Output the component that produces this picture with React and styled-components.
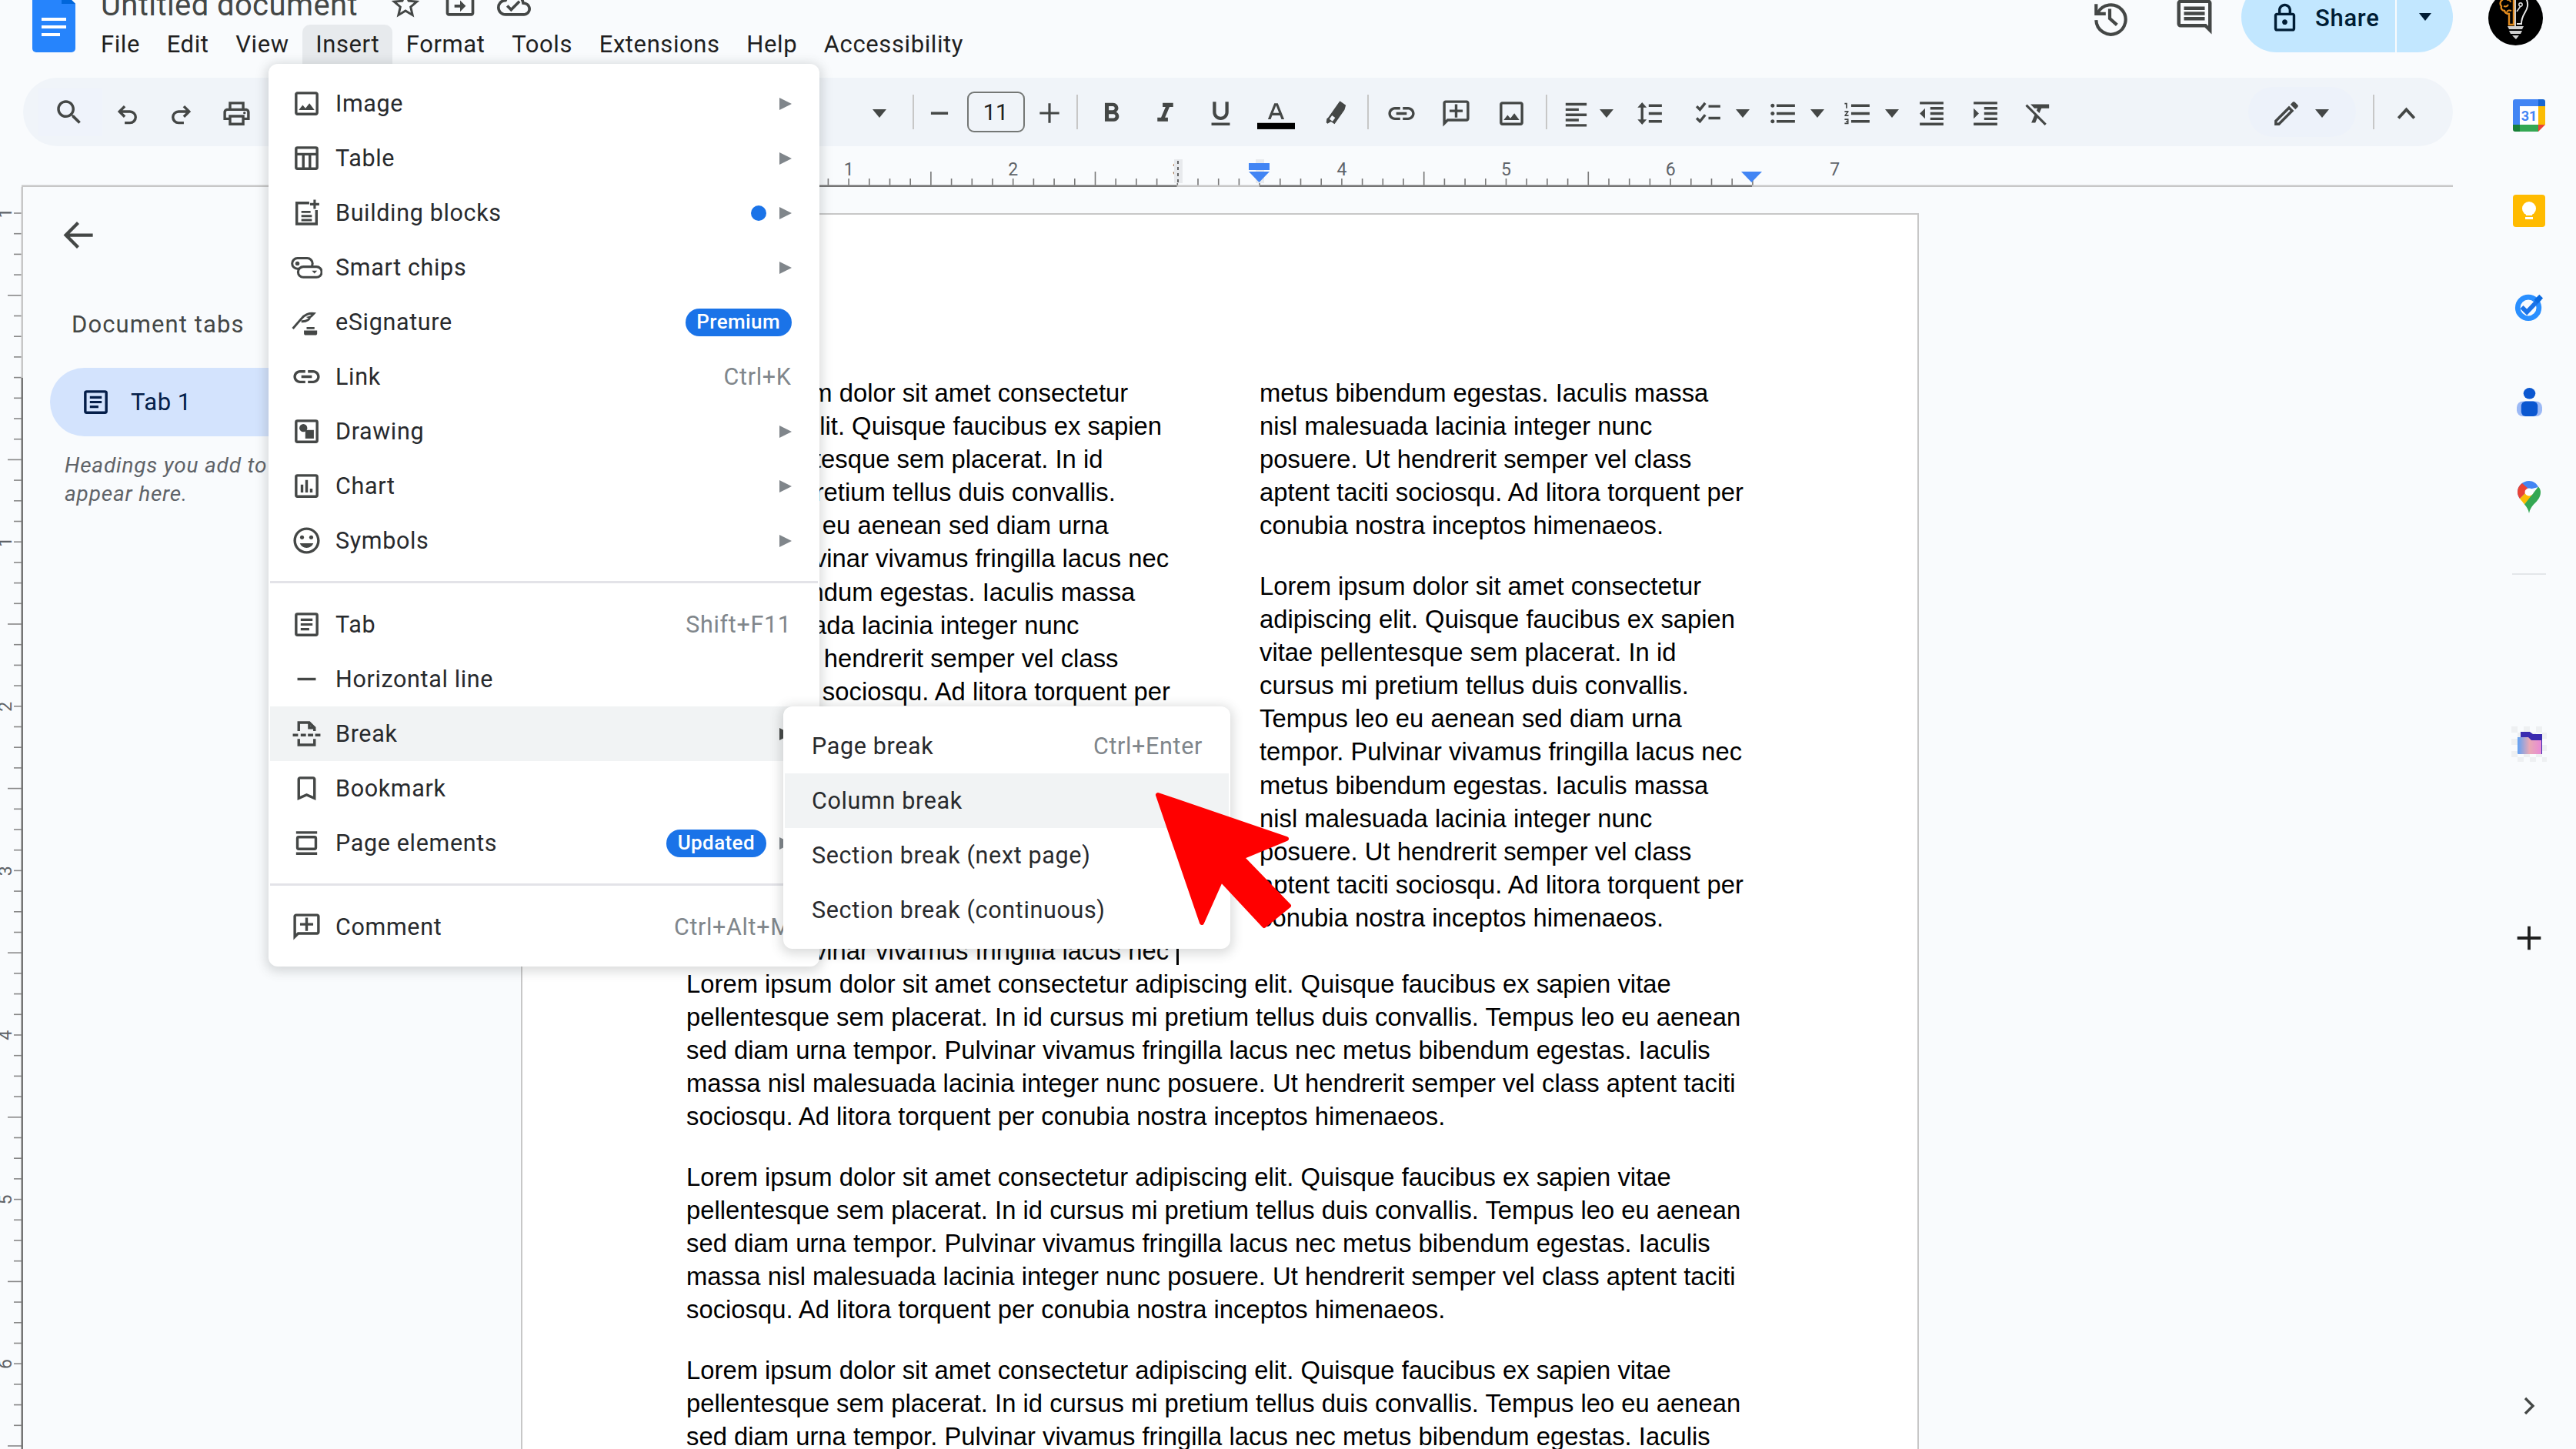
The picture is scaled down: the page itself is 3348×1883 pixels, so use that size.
import React from 'react';
import styled, { createGlobalStyle } from 'styled-components';

const GlobalStyle = createGlobalStyle`
  html, body {
    margin: 0;
    padding: 0;
    overflow: hidden;
    background: #f9fbfd;
  }
  * {
    box-sizing: border-box;
  }
`;

const Root = styled.div`
  position: relative;
  width: 3348px;
  height: 1883px;
  overflow: hidden;
  background: #f9fbfd;
  font-family: Roboto, 'Liberation Sans', sans-serif;
  color: #1f1f1f;
`;

const IconSvg = styled.svg`
  display: block;
  flex: none;
  width: ${(p) => p.$size}px;
  height: ${(p) => p.$size}px;
  color: ${(p) => p.$color || '#444746'};
  fill: currentColor;
`;

const Line = ({ d, w = 2 }) => (
  <path d={d} fill="none" stroke="currentColor" strokeWidth={w} />
);

const icons = {
  image: <path d="M19 5v14H5V5h14m0-2H5c-1.1 0-2 .9-2 2v14c0 1.1.9 2 2 2h14c1.1 0 2-.9 2-2V5c0-1.1-.9-2-2-2zm-4.86 8.86l-3 3.87L9 13.14 6 17h12l-3.86-5.14z" />,
  table: (
    <>
      <rect x="4" y="4" width="16" height="16" rx="1" fill="none" stroke="currentColor" strokeWidth="2" />
      <Line d="M4 9h16M9.5 9v11M14.5 9v11" />
    </>
  ),
  blocks: (
    <>
      <Line d="M14 4.5H4.5v16h15V10" />
      <path d="M8 10.5h7v1.7H8zM8 13.6h8v1.7H8zM8 16.7h8v1.7H8zM17.2 2h1.8v2.6h2.6v1.8H19V9h-1.8V6.4h-2.6V4.6h2.6z" />
    </>
  ),
  chips: (
    <>
      <rect x="1" y="5" width="15.5" height="8" rx="4" fill="none" stroke="currentColor" strokeWidth="1.8" />
      <circle cx="5" cy="9" r="1.6" />
      <rect x="5.5" y="11.5" width="18" height="8" rx="4" fill="#fff" stroke="currentColor" strokeWidth="1.8" />
      <path d="M16 14.5h4l-2 2.2z" />
    </>
  ),
  sign: (
    <>
      <Line d="M1.5 17L8 9.5c2-3 6-4.5 9.5-4-1 1-1.5 2.5-3.5 3 1.2.6-1.8 3.4-6 3" w="1.7" />
      <path d="M10 18.4h10v2.4c0 .7-.5 1.2-1.2 1.2h-7.6c-.7 0-1.2-.5-1.2-1.2zM12 15.8h6v1.6h-6z" />
    </>
  ),
  link: <path d="M17 7h-4v2h4c1.65 0 3 1.35 3 3s-1.35 3-3 3h-4v2h4c2.76 0 5-2.24 5-5s-2.24-5-5-5zm-6 8H7c-1.65 0-3-1.35-3-3s1.35-3 3-3h4V7H7c-2.76 0-5 2.24-5 5s2.24 5 5 5h4v-2zm-3-4h8v2H8z" />,
  drawing: (
    <>
      <rect x="4" y="4" width="16" height="16" rx="1" fill="none" stroke="currentColor" strokeWidth="2" />
      <circle cx="9.5" cy="9.5" r="3" />
      <rect x="11" y="11" width="6.5" height="6.5" />
    </>
  ),
  chart: (
    <>
      <rect x="4" y="4" width="16" height="16" rx="1" fill="none" stroke="currentColor" strokeWidth="2" />
      <path d="M7.5 11h2v6h-2zM11 7.5h2V17h-2zM14.5 14h2v3h-2z" />
    </>
  ),
  smile: (
    <>
      <path d="M11.99 2C6.47 2 2 6.48 2 12s4.47 10 9.99 10C17.52 22 22 17.52 22 12S17.52 2 11.99 2zM12 20c-4.42 0-8-3.58-8-8s3.58-8 8-8 8 3.58 8 8-3.58 8-8 8z" />
      <circle cx="8.5" cy="9.5" r="1.5" />
      <circle cx="15.5" cy="9.5" r="1.5" />
      <path d="M12 17.5c2.33 0 4.31-1.46 5.11-3.5H6.89c.8 2.04 2.78 3.5 5.11 3.5z" />
    </>
  ),
  tab: (
    <>
      <rect x="4" y="4" width="16" height="16" rx="1" fill="none" stroke="currentColor" strokeWidth="2" />
      <path d="M7.5 7.5h9v1.8h-9zM7.5 11.1h9v1.8h-9zM7.5 14.7h6.5v1.8H7.5z" />
    </>
  ),
  hline: <path d="M5 11h14v2H5z" />,
  brk: (
    <>
      <Line d="M6 10V3.5h8l4 4V10M6 16v4.5h12V16" />
      <path d="M13 3.5h2v3h3.5v2H13zM1.5 12h4v2h-4zM7.5 12h4v2h-4zM13 12h4v2h-4zM18.5 12h4v2h-4z" />
    </>
  ),
  bookmark: <path d="M17 3H7c-1.1 0-2 .9-2 2v16l7-3 7 3V5c0-1.1-.9-2-2-2zm0 15l-5-2.18L7 18V5h10v13z" />,
  elements: (
    <>
      <path d="M4 3h16v2H4zM4 19h16v2H4z" />
      <rect x="5" y="7.5" width="14" height="9" rx="1" fill="none" stroke="currentColor" strokeWidth="2" />
    </>
  ),
  addComment: <path d="M20 2H4c-1.1 0-2 .9-2 2v18l4-4h14c1.1 0 2-.9 2-2V4c0-1.1-.9-2-2-2zm0 14H5.17L4 17.17V4h16v12zM13 5h-2v4H7v2h4v4h2v-4h4V9h-4z" />,
  search: <path d="M15.5 14h-.79l-.28-.27C15.41 12.59 16 11.11 16 9.5 16 5.91 13.09 3 9.5 3S3 5.91 3 9.5 5.91 16 9.5 16c1.61 0 3.09-.59 4.23-1.57l.27.28v.79l5 4.99L20.49 19l-4.99-5zm-6 0C7.01 14 5 11.99 5 9.5S7.01 5 9.5 5 14 7.01 14 9.5 11.99 14 9.5 14z" />,
  undo: <Line d="M10 6.5L6 10.5l4 4M6 10.5h8a4.3 4.3 0 0 1 0 8.6h-4" />,
  redo: <Line d="M14 6.5l4 4-4 4M18 10.5h-8a4.3 4.3 0 0 0 0 8.6h4" />,
  print: (
    <>
      <path d="M19 8h-1V3H6v5H5c-1.66 0-3 1.34-3 3v6h4v4h12v-4h4v-6c0-1.66-1.34-3-3-3zM8 5h8v3H8V5zm8 12v2H8v-4h8v2zm2-2v-2H6v2H4v-4c0-.55.45-1 1-1h14c.55 0 1 .45 1 1v4h-2z" />
      <circle cx="18" cy="11.5" r="1" />
    </>
  ),
  minus: <path d="M5 11h14v2.2H5z" />,
  plus: <path d="M11 4h2v7h7v2h-7v7h-2v-7H4v-2h7z" />,
  bold: <path d="M15.6 10.79c.97-.67 1.65-1.77 1.65-2.79 0-2.26-1.75-4-4-4H7v14h7.04c2.09 0 3.71-1.7 3.71-3.79 0-1.52-.86-2.82-2.15-3.42zM10 6.5h3c.83 0 1.5.67 1.5 1.5s-.67 1.5-1.5 1.5h-3v-3zm3.5 9H10v-3h3.5c.83 0 1.5.67 1.5 1.5s-.67 1.5-1.5 1.5z" />,
  italic: <path d="M10 4v3h2.21l-3.42 8H6v3h8v-3h-2.21l3.42-8H18V4z" />,
  underline: <path d="M12 17c3.31 0 6-2.69 6-6V3h-2.5v8c0 1.93-1.57 3.5-3.5 3.5S8.5 12.93 8.5 11V3H6v8c0 3.31 2.69 6 6 6zm-7 2v2h14v-2H5z" />,
  textColor: (
    <>
      <path fillRule="evenodd" d="M10.9 5.5L6.8 15.7h1.8l.9-2.5h5l.9 2.5h1.8L13.1 5.5zM10.1 11.6L12 6.8l1.9 4.8z" />
      <rect x="0" y="18" width="24" height="4" fill="#000" />
    </>
  ),
  marker: <path fillRule="evenodd" d="M15.5 2.5l4.5 3.2-1 3.5-7.6 10.8-2.700-1.900-2.600 1.600-1-.8.4-3 1.100-.9 7.600-10.800zM9.500 13.500l-2 2.800 2.400 1.700 2-2.800z" />,
  addImage: <path d="M19 5v14H5V5h14m0-2H5c-1.1 0-2 .9-2 2v14c0 1.1.9 2 2 2h14c1.1 0 2-.9 2-2V5c0-1.1-.9-2-2-2zm-4.86 8.86l-3 3.87L9 13.14 6 17h12l-3.86-5.14z" />,
  align: <path d="M4 4h16v2H4zM4 8h10v2H4zM4 12h16v2H4zM4 16h10v2H4zM4 20h16v2H4z" />,
  spacing: <path d="M6 3.5L2.5 7.5h2.5v9H2.5L6 20.5l3.5-4H7v-9h2.5zM11 5h10v2H11zM11 11h10v2H11zM11 17h10v2H11z" />,
  checks: (
    <>
      <Line d="M3 6.5l2.5 2.5L9.5 4M3 15.5L5.500 18l4-5" />
      <path d="M12 5.500h9v2h-9zM12 14.500h9v2h-9z" />
    </>
  ),
  bullets: <path d="M4 10.500c-.83 0-1.500.67-1.500 1.500s.67 1.500 1.500 1.500 1.500-.67 1.500-1.500-.67-1.500-1.500-1.500zm0-6c-.83 0-1.500.67-1.500 1.500S3.170 7.500 4 7.500 5.500 6.830 5.500 6 4.830 4.500 4 4.500zm0 12c-.83 0-1.500.68-1.500 1.500s.68 1.500 1.500 1.500 1.500-.68 1.500-1.500-.67-1.500-1.500-1.500zM7 19h14v-2H7v2zm0-6h14v-2H7v2zm0-8v2h14V5H7z" />,
  numbers: <path d="M2 17h2v.5H3v1h1v.5H2v1h3v-4H2v1zm1-9h1V4H2v1h1v3zm-1 3h1.800L2 13.100v.9h3v-1H3.200L5 10.900V10H2v1zm5-6v2h14V5H7zm0 14h14v-2H7v2zm0-6h14v-2H7v2z" />,
  outdent: <path d="M11 17h10v-2H11v2zm-8-5l4 4V8l-4 4zm0 9h18v-2H3v2zM3 3v2h18V3H3zm8 6h10V7H11v2zm0 4h10v-2H11v2z" />,
  indent: <path d="M3 21h18v-2H3v2zM3 8v8l4-4-4-4zm8 9h10v-2H11v2zM3 3v2h18V3H3zm8 6h10V7H11v2zm0 4h10v-2H11v2z" />,
  clear: <path d="M3.270 5L2 6.270l6.970 6.970L6.500 19h3l1.570-3.660L16.730 21 18 19.730 3.550 5.270 3.270 5zM6 5v.18L8.820 8h2.400l-.72 1.680 2.100 2.100L14.210 8H20V5H6z" />,
  pencil: <path d="M14.060 9.020l.92.92L5.920 19H5v-.92l9.060-9.060M17.660 3c-.25 0-.51.1-.7.29l-1.830 1.830 3.750 3.750 1.830-1.830c.39-.39.39-1.020 0-1.410l-2.340-2.340c-.2-.2-.45-.29-.71-.29zm-3.600 3.190L3 17.250V21h3.750L17.810 9.940l-3.750-3.750z" />,
  chevronUp: <Line d="M6 15.500l6-6.500 6 6.500" w="2.200" />,
  chevronRight: <Line d="M9 6l6 6-6 6" />,
  history: (
    <>
      <Line d="M4.500 9.500A9.200 9.200 0 1 1 3.500 14" />
      <path d="M2.500 4v7h7v-2H4.500V4z" />
      <Line d="M12 7v6l4.500 4" />
    </>
  ),
  comments: <path d="M21.990 4c0-1.100-.89-2-1.990-2H4c-1.100 0-2 .9-2 2v12c0 1.100.9 2 2 2h14l4 4-.01-18zM20 4v13.170L18.830 16H4V4h16zM6 12h12v2H6zm0-3h12v2H6zm0-3h12v2H6z" />,
  lock: <path d="M18 8h-1V6c0-2.760-2.240-5-5-5S7 3.240 7 6v2H6c-1.100 0-2 .9-2 2v10c0 1.100.9 2 2 2h12c1.100 0 2-.9 2-2V10c0-1.100-.9-2-2-2zM9 6c0-1.660 1.340-3 3-3s3 1.340 3 3v2H9V6zm9 14H6V10h12v10zm-6-3c1.100 0 2-.9 2-2s-.9-2-2-2-2 .9-2 2 .9 2 2 2z" />,
  star: <path d="M22 9.240l-7.190-.62L12 2 9.190 8.630 2 9.240l5.460 4.730L5.820 21 12 17.270 18.180 21l-1.630-7.030L22 9.240zM12 15.400l-3.760 2.270 1-4.280-3.320-2.880 4.380-.38L12 6.100l1.710 4.040 4.380.38-3.320 2.880 1 4.280L12 15.400z" />,
  move: <path d="M20 6h-8l-2-2H4c-1.100 0-2 .9-2 2v12c0 1.100.9 2 2 2h16c1.100 0 2-.9 2-2V8c0-1.100-.9-2-2-2zm0 12H4V6h5.170l2 2H20v10zM12 17l4-4-4-4v3H8v2h4z" />,
  cloud: (
    <>
      <path d="M19.350 10.040A7.490 7.490 0 0 0 12 4C9.110 4 6.600 5.640 5.350 8.040A5.994 5.994 0 0 0 0 14c0 3.310 2.690 6 6 6h13c2.760 0 5-2.240 5-5 0-2.640-2.050-4.780-4.650-4.960zM19 18H6c-2.210 0-4-1.790-4-4 0-2.050 1.530-3.760 3.560-3.970l1.070-.11.5-.95A5.469 5.469 0 0 1 12 6c2.620 0 4.880 1.860 5.390 4.430l.3 1.500 1.530.11A2.980 2.980 0 0 1 22 15c0 1.650-1.350 3-3 3z" />
      <path d="M10 17l-3.500-3.500 1.410-1.410L10 14.170l5.180-5.180 1.410 1.420z" />
    </>
  ),
  back: <Line d="M21 12H5M12 4.500L4.500 12l7.500 7.500" w="2" />,
};

const Icon = ({ name, size = 41, color }) => (
  <IconSvg viewBox="0 0 24 24" $size={size} $color={color}>
    {icons[name]}
  </IconSvg>
);

/* ---------- header ---------- */

const Header = styled.header`
  display: flex;
  height: 101px;
  padding: 0 43px 0 42px;
`;

const Logo = styled.svg`
  flex: none;
  width: 56px;
  height: 81px;
  margin-top: -13px;
`;

const TitleBlock = styled.div`
  margin-left: 33px;
`;

const TitleRow = styled.div`
  display: flex;
  align-items: center;
  height: 32px;
`;

const Title = styled.div`
  width: 333px;
  margin-top: -19px;
  font-size: 40px;
  line-height: 48px;
  letter-spacing: 0.4px;
  color: #444746;
  white-space: nowrap;
`;

const TitleIcons = styled.div`
  display: flex;
  align-items: center;
  gap: 26.5px;
  margin: -21px 0 0 41px;
`;

const MenuBar = styled.nav`
  display: flex;
  margin-left: -17.3px;
`;

const MenuButton = styled.div`
  height: 55px;
  padding: 0 17.3px;
  line-height: 51px;
  font-size: 31px;
  letter-spacing: 0.6px;
  border-radius: 10px 10px 0 0;
  color: #1f1f1f;
  background: ${(p) => (p.$open ? '#e7eaed' : 'transparent')};
`;

const HeaderActions = styled.div`
  display: flex;
  align-items: center;
  height: 92px;
  margin: -24px 0 0 auto;
`;

const ActionButton = styled.div`
  display: flex;
  justify-content: center;
  width: 110px;
`;

const ShareGroup = styled.div`
  display: flex;
  height: 92px;
  margin-left: 6px;
  color: #001d35;
`;

const ShareMain = styled.div`
  display: flex;
  align-items: center;
  gap: 19px;
  width: 200px;
  padding-left: 36px;
  background: #c2e7ff;
  border-radius: 46px 0 0 46px;
  font-size: 31px;
  font-weight: 500;
  letter-spacing: 0.7px;
  padding-top: 2px;
`;

const ShareDrop = styled.div`
  display: flex;
  align-items: center;
  justify-content: center;
  width: 73px;
  margin-left: 2px;
  background: #c2e7ff;
  border-radius: 0 46px 46px 0;
`;

const Avatar = styled.svg`
  flex: none;
  width: 71px;
  height: 71px;
  margin: 3px 0 0 46px;
`;

/* ---------- toolbar ---------- */

const Workspace = styled.div`
  display: flex;
`;

const Main = styled.main`
  flex: none;
  width: 3200px;
`;

const Toolbar = styled.div`
  display: flex;
  align-items: center;
  height: 89px;
  width: 3158px;
  margin-left: 30px;
  padding-top: 3px;
  background: #f0f4f9;
  border-radius: 45px;
`;

const Slot = styled.div`
  position: relative;
  display: flex;
  justify-content: center;
  align-items: center;
  flex: none;
  width: 0;
  margin-left: ${(p) => p.$dx}px;
`;

const SearchBox = styled.div`
  display: flex;
  align-items: center;
  justify-content: center;
  flex: none;
  width: 83px;
  height: 62px;
  margin-top: -3px;
  padding-right: 3px;
  background: #eff3fb;
`;

const ModeBox = styled.div`
  flex: none;
  width: 140px;
  height: 65px;
  margin-top: -3px;
  border-radius: 32px;
  background: #edf2fa;
`;

const Caret = styled.span`
  flex: none;
  width: 0;
  height: 0;
  border-left: ${(p) => p.$half || 9}px solid transparent;
  border-right: ${(p) => p.$half || 9}px solid transparent;
  border-top: ${(p) => (p.$half ? p.$half + 2 : 11)}px solid ${(p) => p.$color || '#444746'};
`;

const ToolSep = styled.span`
  flex: none;
  width: 2px;
  height: 45px;
  margin-top: -3px;
  background: #c7c7c7;
`;

const SizeBox = styled.div`
  flex: none;
  width: 75px;
  height: 53px;
  margin-top: -3px;
  border: 2px solid #747775;
  border-radius: 9px;
  text-align: center;
  line-height: 50px;
  font-size: 29px;
  color: #1f1f1f;
`;

const Tool = ({ dx, name, size }) => (
  <Slot $dx={dx}>
    <Icon name={name} size={size} />
  </Slot>
);

const ToolCaret = ({ dx }) => (
  <Slot $dx={dx}>
    <Caret />
  </Slot>
);

const Divider = ({ dx }) => (
  <Slot $dx={dx}>
    <ToolSep />
  </Slot>
);

/* ---------- rulers ---------- */

const RulerStrip = styled.svg`
  display: block;
  width: 3160px;
  height: 53px;
  margin-left: 28px;
`;

const INCH = 213.6;
const ORIGIN = 889.5;

const HorizontalRuler = () => {
  const ticks = [];
  for (let i = -8; i <= 52; i += 1) {
    const x = ORIGIN + (i * INCH) / 8;
    const long = ((i % 8) + 8) % 8 === 4;
    ticks.push(<line key={i} x1={x} x2={x} y1={long ? 223 : 232} y2={241} stroke="#777" strokeWidth="1.6" />);
  }
  return (
    <RulerStrip viewBox="28 190 3160 53">
      {ticks}
      {[1, 2, 3, 4, 5, 6, 7].map((n) => (
        <text key={n} x={ORIGIN + n * INCH} y="228" textAnchor="middle" fontFamily="Roboto" fontSize="23" fill="#5f6368">
          {n}
        </text>
      ))}
      <rect x="28" y="240.500" width="3160" height="2.500" fill="#c7c7c7" />
      <rect x="889.500" y="240.500" width="640" height="2.500" fill="#757575" />
      <rect x="1637" y="240.500" width="640" height="2.500" fill="#757575" />
      <rect x="1526" y="207" width="11" height="31" fill="#e8eaed" />
      <line x1="1531" x2="1531" y1="209" y2="237" stroke="#444" strokeWidth="1.600" strokeDasharray="4 4" />
      <rect x="1632" y="207" width="11" height="31" fill="#e8eaed" />
      <rect x="1623" y="212" width="27" height="9" fill="#4285f4" />
      <path d="M1623 223h27l-13.500 14z" fill="#4285f4" />
      <path d="M2263 223h27l-13.500 14z" fill="#4285f4" />
    </RulerStrip>
  );
};

const VRulerSvg = styled.svg`
  display: block;
  flex: none;
  width: 30px;
  height: 1640px;
`;

const VerticalRuler = () => {
  const ticks = [];
  for (let i = 0; i <= 64; i += 1) {
    const y = 277 + (i * INCH) / 8;
    const long = i % 8 === 4;
    ticks.push(<line key={i} x1={long ? 10 : 18} x2="28" y1={y} y2={y} stroke="#888" strokeWidth="1.600" />);
  }
  const labels = [
    { n: 1, y: 277 },
    { n: 1, y: 704.600 },
    { n: 2, y: 918.200 },
    { n: 3, y: 1131.800 },
    { n: 4, y: 1345.400 },
    { n: 5, y: 1559 },
    { n: 6, y: 1772.600 },
  ];
  return (
    <VRulerSvg viewBox="0 243 30 1640">
      {ticks}
      {labels.map((l, i) => (
        <text key={i} transform={`translate(15 ${l.y}) rotate(-90)`} textAnchor="middle" fontFamily="Roboto" fontSize="23" fill="#5f6368">
          {l.n}
        </text>
      ))}
      <rect x="27.500" y="243" width="2.500" height="248" fill="#c7c7c7" />
      <rect x="27.500" y="491" width="2.500" height="1400" fill="#757575" />
    </VRulerSvg>
  );
};

/* ---------- document ---------- */

const Body = styled.div`
  display: flex;
  height: 1640px;
`;

const Sidebar = styled.aside`
  flex: none;
  width: 647px;
  padding: 36.5px 0 0 55px;
`;

const BackIcon = styled.div`
  margin: 0 0 71.5px -9.5px;
`;

const SideTitle = styled.div`
  margin-left: 8px;
  font-size: 31px;
  line-height: 40px;
  letter-spacing: 1.1px;
  color: #444746;
`;

const TabPill = styled.div`
  display: flex;
  align-items: center;
  gap: 25px;
  width: 380px;
  height: 89px;
  margin: 36px 0 0 -20px;
  padding-left: 39px;
  border-radius: 45px;
  background: #d3e3fd;
  font-size: 31px;
  letter-spacing: 0.5px;
  color: #041e49;
`;

const SideHint = styled.div`
  width: 560px;
  margin: 19px 0 0 -1px;
  font-size: 28px;
  line-height: 37px;
  font-style: italic;
  letter-spacing: 0.8px;
  color: #5f6368;
`;

const Page = styled.article`
  flex: none;
  width: 1817px;
  margin-top: 34px;
  padding: 210px 214px 0 213px;
  background: #fff;
  border: solid #c7c7c7;
  border-width: 2px 2px 0 2px;
  font-family: 'Liberation Sans', Arial, sans-serif;
  font-size: 32.800px;
  line-height: 43.100px;
  color: #000;
`;

const Columns = styled.div`
  display: grid;
  grid-template-columns: 640px 640px;
  column-gap: 105px;
`;

const Para = styled.p`
  margin: 0 0 ${(p) => (p.$last ? 0 : 35.5)}px;
`;

const TextLine = styled.span`
  display: block;
  white-space: nowrap;
`;

const Caretline = styled.span`
  display: inline-block;
  width: 3px;
  height: 36px;
  margin-left: 10px;
  vertical-align: -7px;
  background: #000;
`;

const Lines = ({ lines, last, cursor }) => (
  <Para $last={last}>
    {lines.map((line, i) => (
      <TextLine key={i}>
        {line}
        {cursor && i === lines.length - 1 && <Caretline />}
      </TextLine>
    ))}
  </Para>
);

const firstPara = [
  'Lorem ipsum dolor sit amet consectetur',
  'adipiscing elit. Quisque faucibus ex sapien',
  'vitae pellentesque sem placerat. In id',
  'cursus mi pretium tellus duis convallis.',
  'Tempus leo eu aenean sed diam urna',
  'tempor. Pulvinar vivamus fringilla lacus nec',
  'metus bibendum egestas. Iaculis massa',
  'nisl malesuada lacinia integer nunc',
  'posuere. Ut hendrerit semper vel class',
  'aptent taciti sociosqu. Ad litora torquent per',
  'conubia nostra inceptos himenaeos.',
];

const wide = [
  'Lorem ipsum dolor sit amet consectetur adipiscing elit. Quisque faucibus ex sapien vitae',
  'pellentesque sem placerat. In id cursus mi pretium tellus duis convallis. Tempus leo eu aenean',
  'sed diam urna tempor. Pulvinar vivamus fringilla lacus nec metus bibendum egestas. Iaculis',
  'massa nisl malesuada lacinia integer nunc posuere. Ut hendrerit semper vel class aptent taciti',
  'sociosqu. Ad litora torquent per conubia nostra inceptos himenaeos.',
];

/* ---------- side rail ---------- */

const Rail = styled.aside`
  display: flex;
  flex-direction: column;
  align-items: center;
  flex: none;
  width: 148px;
  padding: 28px 0 0 26px;
`;

const RailItem = styled.div`
  display: flex;
  align-items: center;
  justify-content: center;
  flex: none;
  width: 46px;
  height: 42px;
  margin-bottom: ${(p) => p.$after}px;
`;

const RailLine = styled.div`
  flex: none;
  width: 44px;
  height: 2px;
  margin-bottom: 199px;
  background: #e3e6ea;
`;

const RailSvg = styled.svg`
  display: block;
  width: ${(p) => p.$w}px;
  height: ${(p) => p.$h}px;
`;

/* ---------- menus ---------- */

const Menu = styled.div`
  position: absolute;
  z-index: 2;
  left: 349px;
  top: 83px;
  width: 716px;
  height: 1173px;
  padding: 16px 2px;
  background: #fff;
  border-radius: 12px;
  box-shadow: 0 3px 14px 4px rgba(60, 64, 67, 0.18);
`;

const SubMenu = styled(Menu)`
  z-index: 3;
  left: 1018px;
  top: 918px;
  width: 581px;
  height: 315px;
`;

const Row = styled.div`
  display: flex;
  align-items: center;
  height: 71px;
  padding: 0 ${(p) => p.$right || 34.5}px 0 ${(p) => p.$left || 27}px;
  font-size: 30.500px;
  letter-spacing: 0.65px;
  color: #282a2d;
  white-space: nowrap;
  background: ${(p) => (p.$active ? '#f1f3f4' : 'transparent')};
`;

const RowIcon = styled.span`
  display: flex;
  justify-content: center;
  flex: none;
  width: 41px;
  margin-right: 17px;
`;

const Right = styled.span`
  display: flex;
  align-items: center;
  margin-left: auto;
`;

const Shortcut = styled.span`
  color: #80868b;
`;

const Badge = styled.span`
  height: 36px;
  padding: 0 14.5px;
  border-radius: 18px;
  background: #1a73e8;
  color: #fff;
  font-size: 26px;
  font-weight: 500;
  line-height: 35px;
  letter-spacing: 0.4px;
`;

const Dot = styled.span`
  width: 20px;
  height: 20px;
  border-radius: 50%;
  background: #1a73e8;
`;

const SubArrow = styled.span`
  width: 0;
  height: 0;
  margin-left: 17px;
  border-top: 8px solid transparent;
  border-bottom: 8px solid transparent;
  border-left: 16px solid ${(p) => (p.$dark ? '#444746' : '#80868b')};
`;

const MenuLine = styled.div`
  height: 3px;
  margin: 17px 0 18px;
  background: #e3e3e8;
`;

const RedArrow = styled.svg`
  position: absolute;
  z-index: 4;
  left: 1490px;
  top: 1020px;
  width: 200px;
  height: 200px;
`;

const groups = [
  [
    { icon: 'image', label: 'Image', arrow: true },
    { icon: 'table', label: 'Table', arrow: true },
    { icon: 'blocks', label: 'Building blocks', dot: true, arrow: true },
    { icon: 'chips', label: 'Smart chips', arrow: true },
    { icon: 'sign', label: 'eSignature', badge: 'Premium' },
    { icon: 'link', label: 'Link', shortcut: 'Ctrl+K' },
    { icon: 'drawing', label: 'Drawing', arrow: true },
    { icon: 'chart', label: 'Chart', arrow: true },
    { icon: 'smile', label: 'Symbols', arrow: true },
  ],
  [
    { icon: 'tab', label: 'Tab', shortcut: 'Shift+F11' },
    { icon: 'hline', label: 'Horizontal line' },
    { icon: 'brk', label: 'Break', arrow: true, active: true },
    { icon: 'bookmark', label: 'Bookmark' },
    { icon: 'elements', label: 'Page elements', badge: 'Updated', arrow: true },
  ],
  [{ icon: 'addComment', label: 'Comment', shortcut: 'Ctrl+Alt+M' }],
];

const subItems = [
  { label: 'Page break', shortcut: 'Ctrl+Enter' },
  { label: 'Column break', active: true },
  { label: 'Section break (next page)' },
  { label: 'Section break (continuous)' },
];

const InsertMenu = () => (
  <Menu>
    {groups.map((group, g) => (
      <React.Fragment key={g}>
        {g > 0 && <MenuLine />}
        {group.map((item) => (
          <Row key={item.label} $active={item.active}>
            <RowIcon>
              <Icon name={item.icon} />
            </RowIcon>
            {item.label}
            <Right>
              {item.shortcut && <Shortcut>{item.shortcut}</Shortcut>}
              {item.badge && <Badge>{item.badge}</Badge>}
              {item.dot && <Dot />}
              {item.arrow && <SubArrow $dark={item.active} />}
            </Right>
          </Row>
        ))}
      </React.Fragment>
    ))}
  </Menu>
);

const BreakMenu = () => (
  <SubMenu>
    {subItems.map((item) => (
      <Row key={item.label} $active={item.active} $left={35} $right={34}>
        {item.label}
        <Right>{item.shortcut && <Shortcut>{item.shortcut}</Shortcut>}</Right>
      </Row>
    ))}
  </SubMenu>
);

export default function App() {
  return (
    <Root>
      <GlobalStyle />
      <Header>
        <Logo viewBox="0 0 56 81">
          <path d="M5 0h33l18 18v58a5 5 0 0 1-5 5H5a5 5 0 0 1-5-5V5a5 5 0 0 1 5-5z" fill="#2684fc" />
          <path d="M38 0l18 18H38z" fill="#0066da" />
          <path d="M12 36h32v4H12zM12 46h32v4H12zM12 56h24v4H12z" fill="#fff" />
        </Logo>
        <TitleBlock>
          <TitleRow>
            <Title>Untitled document</Title>
            <TitleIcons>
              <Icon name="star" size={44} />
              <Icon name="move" size={44} />
              <Icon name="cloud" size={44} />
            </TitleIcons>
          </TitleRow>
          <MenuBar>
            <MenuButton>File</MenuButton>
            <MenuButton>Edit</MenuButton>
            <MenuButton>View</MenuButton>
            <MenuButton $open>Insert</MenuButton>
            <MenuButton>Format</MenuButton>
            <MenuButton>Tools</MenuButton>
            <MenuButton>Extensions</MenuButton>
            <MenuButton>Help</MenuButton>
            <MenuButton>Accessibility</MenuButton>
          </MenuBar>
        </TitleBlock>
        <HeaderActions>
          <ActionButton>
            <Icon name="history" size={50} />
          </ActionButton>
          <ActionButton>
            <Icon name="comments" size={54} />
          </ActionButton>
          <ShareGroup>
            <ShareMain>
              <Icon name="lock" size={41} color="#001d35" />
              Share
            </ShareMain>
            <ShareDrop>
              <Caret $half={8} $color="#001d35" />
            </ShareDrop>
          </ShareGroup>
          <Avatar viewBox="0 0 71 71">
            <circle cx="35.500" cy="35.500" r="35.500" fill="#000" />
            <path d="M33 3c-5-2-9 0-10 3-4 0-6 3-5 6-3 2-3 6-1 8-1 3 1 6 4 6 1 3 4 4 6 4l0 14h6z" fill="none" stroke="#e08a1e" strokeWidth="2.400" />
            <path d="M24 12c3-1 5 1 5 3M20 20c3 1 5 0 6-2M24 28c1-3 4-3 6-2" fill="none" stroke="#e08a1e" strokeWidth="2" />
            <path d="M37 2c9 1 15 9 14 18-1 8-8 11-8 23h-6" fill="none" stroke="#e6e6e6" strokeWidth="2" />
            <path d="M37 27l5-7" stroke="#e6e6e6" strokeWidth="1.600" />
            <circle cx="42" cy="18" r="2.200" fill="none" stroke="#e6e6e6" strokeWidth="1.400" />
            <path d="M35 2v44" stroke="#fff" strokeWidth="1.600" />
            <path d="M25 46h21l-2 4H27zM27 52h17l-2 4H29zM31 58h9l-4 5z" fill="#d0d0d0" />
          </Avatar>
        </HeaderActions>
      </Header>

      <Workspace>
        <Main>
          <Toolbar>
            <Slot $dx={61.5}>
              <SearchBox>
                <Icon name="search" size={42} />
              </SearchBox>
            </Slot>
            <Tool dx={73.5} name="undo" />
            <Tool dx={70} name="redo" />
            <Tool dx={72} name="print" />
            <ToolCaret dx={836} />
            <Divider dx={44} />
            <Tool dx={34} name="minus" size={38} />
            <Slot $dx={73}>
              <SizeBox>11</SizeBox>
            </Slot>
            <Tool dx={70} name="plus" size={38} />
            <Divider dx={36} />
            <Tool dx={44} name="bold" />
            <Tool dx={70} name="italic" />
            <Tool dx={72} name="underline" />
            <Tool dx={72} name="textColor" size={49} />
            <Tool dx={77} name="marker" />
            <Divider dx={43} />
            <Tool dx={43} name="link" />
            <Tool dx={71} name="addComment" />
            <Tool dx={72} name="addImage" />
            <Divider dx={46} />
            <Tool dx={38} name="align" />
            <ToolCaret dx={40} />
            <Tool dx={56} name="spacing" />
            <Tool dx={76} name="checks" />
            <ToolCaret dx={45} />
            <Tool dx={52} name="bullets" />
            <ToolCaret dx={45} />
            <Tool dx={52} name="numbers" />
            <ToolCaret dx={45} />
            <Tool dx={51} name="outdent" />
            <Tool dx={70} name="indent" />
            <Tool dx={69} name="clear" />
            <Slot $dx={343}>
              <ModeBox />
            </Slot>
            <Tool dx={-21} name="pencil" />
            <ToolCaret dx={47} />
            <Divider dx={67} />
            <Tool dx={42} name="chevronUp" />
          </Toolbar>
          <HorizontalRuler />
          <Body>
            <VerticalRuler />
            <Sidebar>
              <BackIcon>
                <Icon name="back" size={51} />
              </BackIcon>
              <SideTitle>Document tabs</SideTitle>
              <TabPill>
                <Icon name="tab" size={41} color="#041e49" />
                Tab 1
              </TabPill>
              <SideHint>Headings you add to the document will appear here.</SideHint>
            </Sidebar>
            <Page>
              <Columns>
                <div>
                  <Lines lines={firstPara} />
                  <Lines lines={firstPara.slice(0, 6)} last cursor />
                </div>
                <div>
                  <Lines lines={firstPara.slice(6)} />
                  <Lines lines={firstPara} last />
                </div>
              </Columns>
              <Lines lines={wide} />
              <Lines lines={wide} />
              <Lines lines={wide} />
            </Page>
          </Body>
        </Main>
        <Rail>
          <RailItem $after={82}>
            <RailSvg viewBox="0 0 42 42" $w={42} $h={42}>
              <path d="M3 0h32v9H9v24H0V3a3 3 0 0 1 3-3z" fill="#4285f4" />
              <path d="M33 0h6a3 3 0 0 1 3 3v6h-9z" fill="#1967d2" />
              <path d="M33 9h9v24h-9z" fill="#fbbc04" />
              <path d="M9 33h24v9H9z" fill="#34a853" />
              <path d="M0 33h9v9H3a3 3 0 0 1-3-3z" fill="#188038" />
              <path d="M33 33h9l-9 9z" fill="#ea4335" />
              <rect x="9" y="9" width="24" height="24" fill="#fff" />
              <text x="21" y="28" textAnchor="middle" fontFamily="Roboto" fontWeight="700" fontSize="18" fill="#4285f4">31</text>
            </RailSvg>
          </RailItem>
          <RailItem $after={82}>
            <RailSvg viewBox="0 0 42 42" $w={42} $h={42}>
              <rect width="42" height="42" rx="4" fill="#ffbb00" />
              <circle cx="21" cy="18" r="9" fill="#fff" />
              <path d="M17 24h8v3h-8zM16 29h10v3H16z" fill="#fff" />
            </RailSvg>
          </RailItem>
          <RailItem $after={82}>
            <RailSvg viewBox="0 0 42 42" $w={40} $h={40}>
              <circle cx="20" cy="23" r="14.500" fill="none" stroke="#2a8fff" strokeWidth="7" />
              <path d="M11 22l7 7L36 10" fill="none" stroke="#1a73e8" strokeWidth="6" />
              <path d="M28 12l7-7 5 5-7 7z" fill="#0b6ae0" />
            </RailSvg>
          </RailItem>
          <RailItem $after={82}>
            <RailSvg viewBox="0 0 34 38" $w={33} $h={37}>
              <rect x="0" y="18" width="34" height="20" rx="8" fill="#9cb9f6" />
              <rect x="6" y="18" width="22" height="20" rx="6" fill="#0b57d0" />
              <ellipse cx="17" cy="7.500" rx="8" ry="7.500" fill="#0b57d0" />
            </RailSvg>
          </RailItem>
          <RailItem $after={78}>
            <RailSvg viewBox="0 0 30 42" $w={30} $h={42}>
              <path d="M15 0C6.500 0 0 6.500 0 14.500c0 3.500 1.500 6.500 3 8.500l12-12 12-3C25 3 20.500 0 15 0z" fill="#4285f4" />
              <path d="M0 14.500c0 3.500 1.500 6.500 3 8.500L15 11 6 3C2.500 5.500 0 9.500 0 14.500z" fill="#ea4335" />
              <path d="M3 23c2 2.500 4.500 5 6 7.500L21 18l-6-7z" fill="#fbbc04" />
              <path d="M9 30.500c3 3.500 5 6.500 6 11.500 1-5 3-8 6-11.500 5-5 9-9 9-16 0-2.500-1-5-3-7L9 30.500z" fill="#34a853" />
              <ellipse cx="15" cy="14.500" rx="5.500" ry="5" fill="#fff" />
            </RailSvg>
          </RailItem>
          <RailLine />
          <RailItem $after={210}>
            <RailSvg viewBox="0 0 46 46" $w={46} $h={46}>
              <defs>
                <linearGradient id="folderFill" x1="0" x2="1" y1="0" y2="0">
                  <stop offset="0" stopColor="#5fa1f4" />
                  <stop offset="0.5" stopColor="#e9a9b6" />
                  <stop offset="1" stopColor="#e88ad6" />
                </linearGradient>
              </defs>
              {[0, 1, 2, 3, 4, 5].map((r) =>
                [0, 1, 2, 3, 4, 5].map((c) =>
                  (r + c) % 2 === 0 ? <rect key={`${r}-${c}`} x={c * 8} y={r * 8} width="8" height="8" fill="#eef0f2" /> : null
                )
              )}
              <path d="M12 7h12l4 3h12v26H12z" fill="#3a2bb0" />
              <path d="M8 14h14l4 4h13v18H9a1 1 0 0 1-1-1z" fill="url(#folderFill)" />
            </RailSvg>
          </RailItem>
          <RailItem $after={566}>
            <Icon name="plus" size={46} color="#1f1f1f" />
          </RailItem>
          <RailItem $after={0}>
            <Icon name="chevronRight" size={40} />
          </RailItem>
        </Rail>
      </Workspace>

      <InsertMenu />
      <BreakMenu />
      <RedArrow viewBox="1490 1020 200 200">
        <path
          d="M1505 1033L1672 1090L1614 1114L1675 1177L1643 1203L1587 1143L1562 1199Z"
          fill="#ff0000"
          stroke="#ff0000"
          strokeWidth="6"
          strokeLinejoin="round"
        />
      </RedArrow>
    </Root>
  );
}
